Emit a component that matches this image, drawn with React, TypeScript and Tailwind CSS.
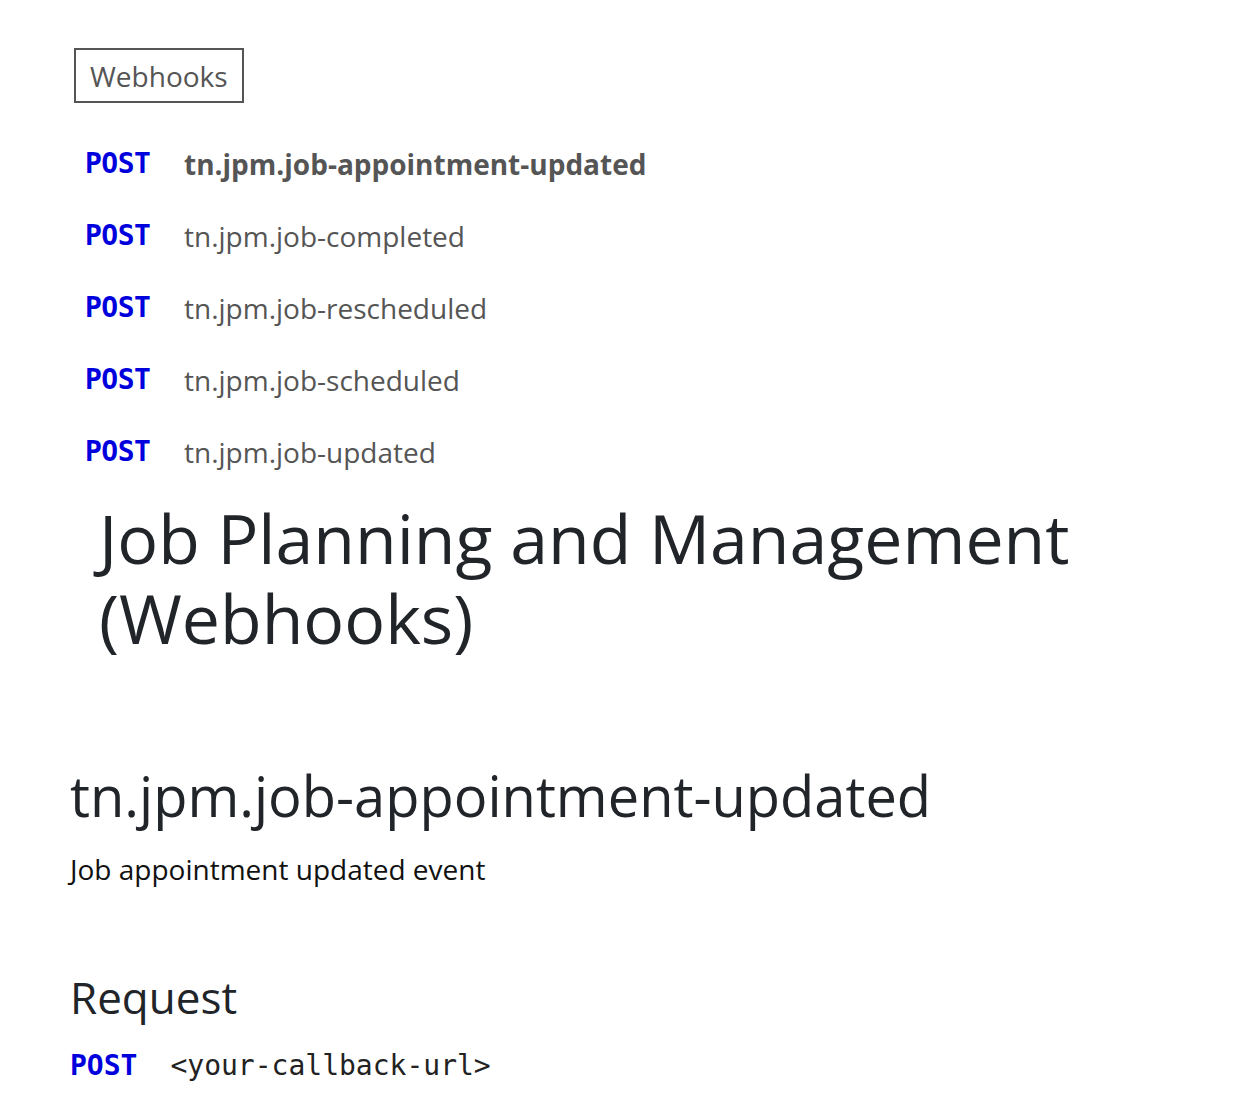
import React from "react";

const items = [
  "tn.jpm.job-appointment-updated",
  "tn.jpm.job-completed",
  "tn.jpm.job-rescheduled",
  "tn.jpm.job-scheduled",
  "tn.jpm.job-updated",
];

export default function App() {
  return (
    <div className="min-h-screen bg-white font-['Open_Sans',sans-serif] text-[#212529]">
      <div className="pl-[74px] pt-[48px]">
        <div className="inline-flex h-[55px] items-center border-2 border-[#555] px-[14px] text-[28px] text-[#555]">
          Webhooks
        </div>
        <ul className="mt-[25px] pl-[11px]">
          {items.map((it, i) => (
            <li key={it} className="flex h-[72px] items-center">
              <span className="w-[99px] font-['DejaVu_Sans_Mono',monospace] text-[28px] font-bold tracking-[-0.5px] text-[#0000dd]">
                POST
              </span>
              <span className={`text-[28px] text-[#555] ${i === 0 ? "font-bold" : ""}`}>{it}</span>
            </li>
          ))}
        </ul>
      </div>
      <div className="pl-[70px]">
        <h1 className="pl-[29px] text-[68px] leading-[80px] mt-[10px]">
          Job Planning and Management
          <br />
          (Webhooks)
        </h1>
        <h2 className="mt-[102px] text-[56px] leading-[70px]">tn.jpm.job-appointment-updated</h2>
        <p className="mt-[21px] text-[28px] leading-[36px] text-[#111]">Job appointment updated event</p>
        <h3 className="mt-[82px] text-[44px] leading-[56px]">Request</h3>
        <div className="mt-[21px] flex items-center font-['DejaVu_Sans_Mono',monospace] text-[28px] leading-[40px]">
          <span className="font-bold text-[#0000dd]">POST</span>
          <span className="ml-[33px] text-[#222]">&lt;your-callback-url&gt;</span>
        </div>
      </div>
    </div>
  );
}
